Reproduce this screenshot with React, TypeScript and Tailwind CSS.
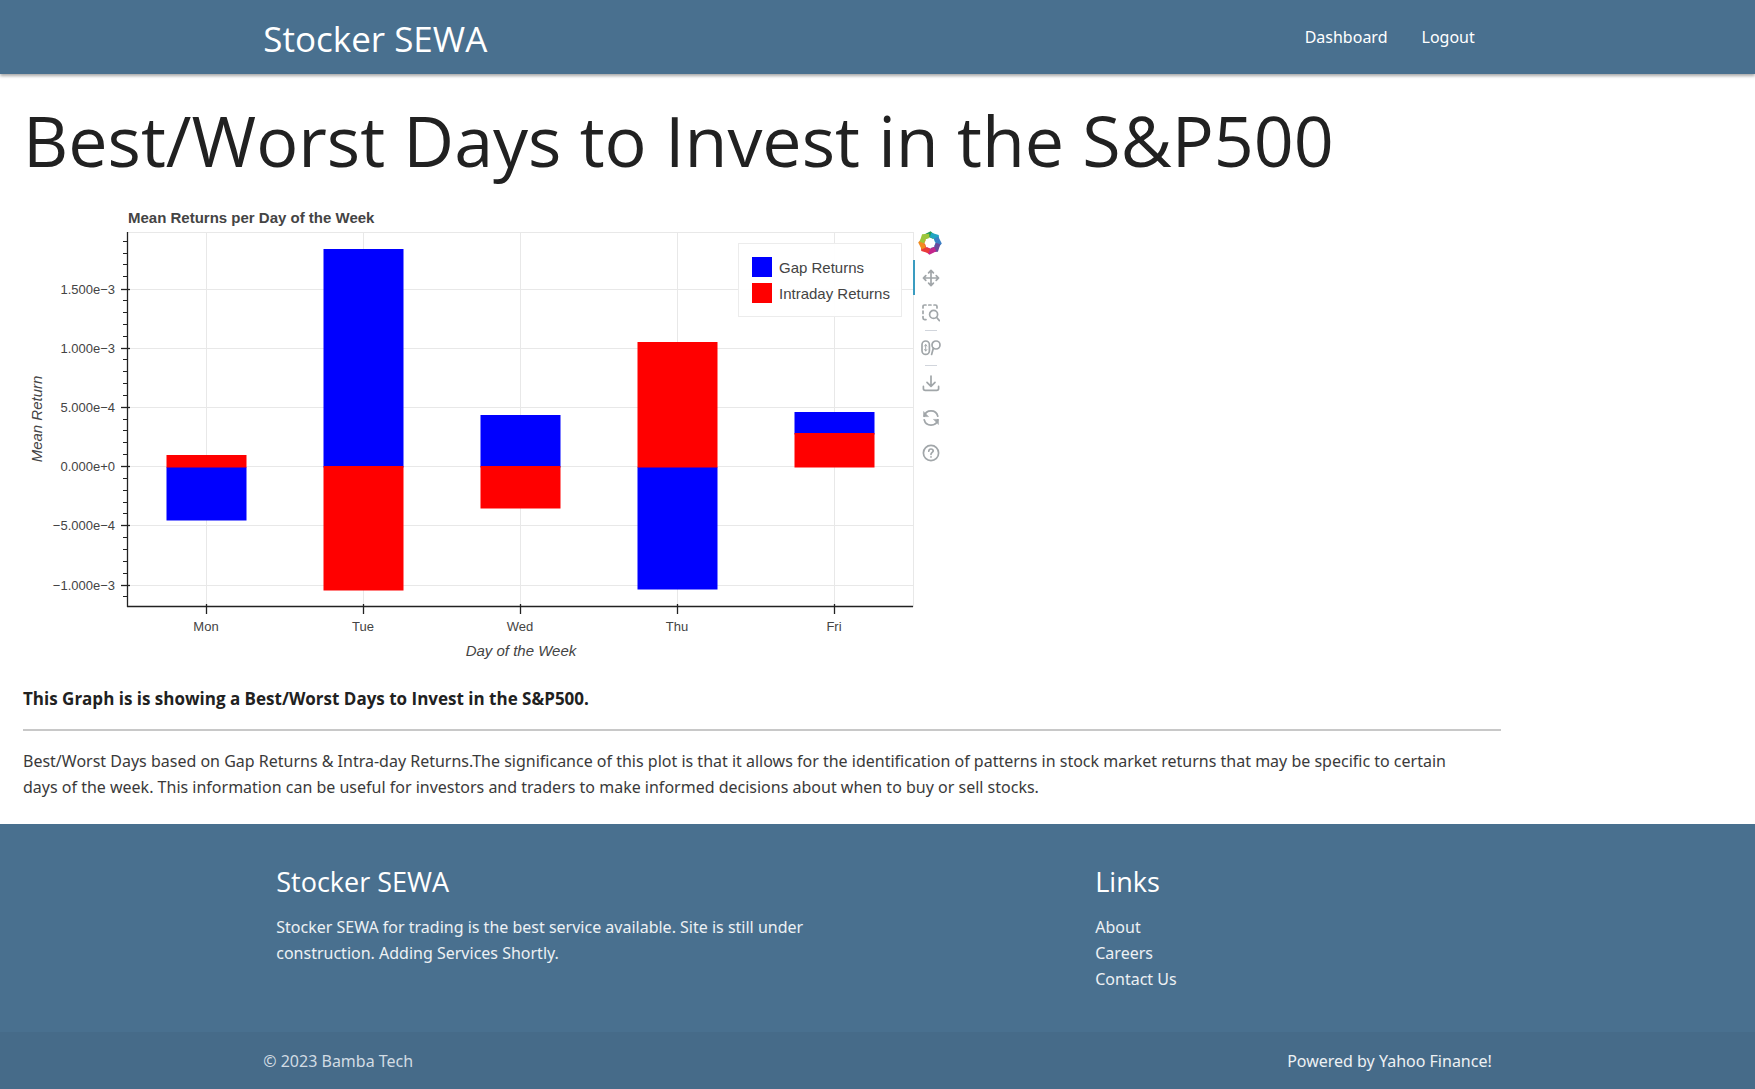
import React from "react";

const days = [
  { name: "Mon", x: 206, bars: [["#0000ff", 467, 520], ["#ff0000", 455, 467]] },
  { name: "Tue", x: 363, bars: [["#0000ff", 249, 467], ["#ff0000", 466, 590]] },
  { name: "Wed", x: 520, bars: [["#0000ff", 415, 467], ["#ff0000", 466, 508]] },
  { name: "Thu", x: 677, bars: [["#0000ff", 467, 589], ["#ff0000", 342, 467]] },
  { name: "Fri", x: 834, bars: [["#0000ff", 412, 434], ["#ff0000", 433, 467]] },
] as { name: string; x: number; bars: [string, number, number][] }[];

const yTicks: [string, number][] = [
  ["1.500e−3", 289],
  ["1.000e−3", 348],
  ["5.000e−4", 407],
  ["0.000e+0", 466],
  ["−5.000e−4", 525],
  ["−1.000e−3", 585],
];

const minorTicks = Array.from({ length: 31 }, (_, i) => i - 11)
  .filter((n) => n % 5 !== 0)
  .map((n) => Math.round(466 - n * 11.86));

function Chart() {
  return (
    <svg
      viewBox="23 205 892 460"
      width="892"
      height="460"
      role="img"
      aria-label="Mean Returns per Day of the Week"
      className="shrink-0 overflow-visible font-['Liberation_Sans',sans-serif]"
    >
      <text x="128" y="223" fontSize="15" fontWeight="700" fill="#444">
        Mean Returns per Day of the Week
      </text>
      <g stroke="#e8e8e8" fill="none">
        <rect x="127.5" y="232.5" width="786" height="374" />
        {yTicks.map(([label, y]) => (
          <path key={label} d={`M128 ${y + 0.5}H913`} />
        ))}
        {days.map((d) => (
          <path key={d.name} d={`M${d.x + 0.5} 232V606`} />
        ))}
      </g>
      {days.map((d) =>
        d.bars.map(([color, top, bottom]) => (
          <rect key={d.name + color} x={d.x - 39.5} y={top} width="80" height={bottom - top + 0.5} fill={color} />
        )),
      )}
      <g stroke="#222" fill="none">
        <path d="M127.5 232V607M127 606.5H913" strokeWidth="1.3" />
        {yTicks.map(([label, y]) => (
          <path key={label} d={`M121 ${y + 0.5}H130`} strokeWidth="1.3" />
        ))}
        {minorTicks.map((y) => (
          <path key={y} d={`M123 ${y + 0.5}H128`} />
        ))}
        {days.map((d) => (
          <path key={d.name} d={`M${d.x + 0.5} 604V614`} strokeWidth="1.3" />
        ))}
      </g>
      <g fontSize="13" fill="#444">
        {yTicks.map(([label, y]) => (
          <text key={label} x="115" y={y + 5} textAnchor="end">
            {label}
          </text>
        ))}
        {days.map((d) => (
          <text key={d.name} x={d.x} y="631" textAnchor="middle">
            {d.name}
          </text>
        ))}
      </g>
      <g fontSize="15" fontStyle="italic" fill="#444" textAnchor="middle">
        <text x="521" y="656">Day of the Week</text>
        <text transform="translate(42 419) rotate(-90)">Mean Return</text>
      </g>
      <rect x="738.5" y="243.5" width="163" height="73" fill="#fff" fillOpacity="0.95" stroke="#ececec" />
      <rect x="752" y="257" width="20" height="20" fill="#0000ff" />
      <rect x="752" y="283" width="20" height="20" fill="#ff0000" />
      <g fontSize="15" fill="#444">
        <text x="779" y="273">Gap Returns</text>
        <text x="779" y="299">Intraday Returns</text>
      </g>
    </svg>
  );
}

const petals = ["#1f9a5a", "#22a6c4", "#3b7fc4", "#6a4a9c", "#c4268c", "#ea3b3b", "#f28a20", "#9cc63c"];

function BokehLogo() {
  return (
    <svg viewBox="-12 -12 24 24" className="size-6" aria-hidden="true">
      {petals.map((color, i) => (
        <path key={color} d="M-6.4 -8.2L0.6 -11.8L6 -7.2L3.2 -4L-0.6 -5.8L-4.2 -4Z" fill={color} transform={`rotate(${i * 45})`} />
      ))}
    </svg>
  );
}

const iconProps = {
  viewBox: "0 0 18 18",
  className: "size-[18px]",
  fill: "none",
  stroke: "#a1a6a9",
  strokeWidth: 1.7,
  strokeLinecap: "round" as const,
  strokeLinejoin: "round" as const,
  "aria-hidden": true,
};

const PanIcon = () => (
  <svg {...iconProps}>
    <path d="M9 1.5v15M1.5 9h15M6.6 3.8L9 1.4l2.4 2.4M6.6 14.2L9 16.6l2.4-2.4M3.8 6.6L1.4 9l2.4 2.4M14.2 6.6L16.6 9l-2.4 2.4" />
  </svg>
);
const BoxZoomIcon = () => (
  <svg {...iconProps}>
    <path d="M1 4V2.6Q1 1 2.6 1H4M6.8 1H9M12 1h1.4Q15 1 15 2.6V4M1 7v2.5M1 12.5V14q0 1.6 1.6 1.6H4" />
    <circle cx="11.6" cy="10.4" r="4" />
    <path d="M14.5 13.3L17.4 16.6" />
  </svg>
);
const WheelZoomIcon = () => (
  <svg {...iconProps} viewBox="0 0 20 18" className="h-[18px] w-5">
    <rect x="1" y="2" width="7.4" height="13.4" rx="3.7" />
    <path d="M4.7 5.6v6.4M3.6 7l1.1-1.4 1.1 1.4M3.6 10.6l1.1 1.4 1.1-1.4" strokeWidth="1" />
    <circle cx="15" cy="6" r="4" />
    <path d="M12.4 9L10.6 15.4" />
  </svg>
);
const SaveIcon = () => (
  <svg {...iconProps}>
    <path d="M9 2v10M5 8.4L9 12.4l4-4M1.4 12.4v2.2Q1.4 16.4 3.2 16.4h11.6Q16.6 16.4 16.6 14.6v-2.2" />
  </svg>
);
const ResetIcon = () => (
  <svg {...iconProps}>
    <path d="M2.2 7.2A7 7 0 0 1 15.8 7.2M15.8 10.8A7 7 0 0 1 2.2 10.8" />
    <path d="M1.6 2.8V7.6H6.2ZM16.4 15.2V10.4H11.8Z" fill="#a1a6a9" strokeWidth="0.6" />
  </svg>
);
const HelpIcon = () => (
  <svg {...iconProps}>
    <circle cx="9" cy="9" r="7.6" />
    <path d="M6.8 7.2Q6.9 5 9 5t2.2 1.9C11.2 8.4 9 8.5 9 10.3M9 12.9v.1" />
  </svg>
);

function Tool({ label, active, children }: { label: string; active?: boolean; children: React.ReactNode }) {
  return (
    <button
      type="button"
      aria-label={label}
      className={
        active
          ? "flex h-[35px] w-[34px] items-center justify-center border-l-2 border-[#3a9cc0]"
          : "flex h-[35px] w-[34px] items-center justify-center border-l-2 border-transparent"
      }
    >
      {children}
    </button>
  );
}

const Divider = () => <span className="-mb-px ml-3 h-px w-3 bg-gray-300" />;

export default function App() {
  return (
    <div className="flex min-h-screen flex-col bg-white font-['Noto_Sans','Open_Sans',sans-serif] text-base text-[#212121]">
      <header className="z-10 bg-[#49708f] text-white shadow-[0_2px_3px_rgba(0,0,0,0.35)]">
        <nav className="mx-auto flex h-[74px] w-[70%] items-center justify-between">
          <a href="#" className="pt-[3px] font-['Open_Sans',sans-serif] text-[35px] leading-none">
            Stocker SEWA
          </a>
          <div className="flex">
            <a href="#dashboard" className="px-[17px]">Dashboard</a>
            <a href="#logout" className="px-[17px]">Logout</a>
          </div>
        </nav>
      </header>

      <main className="px-[23px]">
        <h1 className="pt-[26px] font-['Open_Sans',sans-serif] text-[70px] leading-[80px]">Best/Worst Days to Invest in the S&amp;P500</h1>
        <section className="flex pt-[25px]">
          <Chart />
          <div className="-ml-[2px] flex flex-col pt-5">
            <a href="https://bokeh.org/" aria-label="Bokeh" className="flex h-[35px] w-[34px] items-center justify-center">
              <BokehLogo />
            </a>
            <Tool label="Pan" active>
              <PanIcon />
            </Tool>
            <Tool label="Box Zoom">
              <BoxZoomIcon />
            </Tool>
            <Divider />
            <Tool label="Wheel Zoom">
              <WheelZoomIcon />
            </Tool>
            <Divider />
            <Tool label="Save">
              <SaveIcon />
            </Tool>
            <Tool label="Reset">
              <ResetIcon />
            </Tool>
            <Tool label="Help">
              <HelpIcon />
            </Tool>
          </div>
        </section>
        <div className="max-w-[1478px] pb-6 leading-[26px]">
          <p className="pt-[21px] font-['Open_Sans',sans-serif] text-[17px] font-bold">
            This Graph is is showing a Best/Worst Days to Invest in the S&amp;P500.
          </p>
          <hr className="my-[17px] border-t-2 border-[#c8c8c8]" />
          <p className="pr-5 text-[#3a3a3a]">
            Best/Worst Days based on Gap Returns &amp; Intra-day Returns.The significance of this plot is that it allows
            for the identification of patterns in stock market returns that may be specific to certain days of the week.
            This information can be useful for investors and traders to make informed decisions about when to buy or sell
            stocks.
          </p>
        </div>
      </main>

      <footer className="flex grow flex-col bg-[#49708f] leading-[26px] text-[#edf1f4]">
        <div className="mx-auto grid w-[70%] grow grid-cols-12 pt-[42px]">
          <div className="col-span-6 px-[13px]">
            <h2 className="font-['Open_Sans',sans-serif] text-[27px] leading-8 text-white">Stocker SEWA</h2>
            <p className="pt-4">
              Stocker SEWA for trading is the best service available. Site is still under construction. Adding Services
              Shortly.
            </p>
          </div>
          <div className="col-span-4 col-start-9 px-[13px]">
            <h2 className="font-['Open_Sans',sans-serif] text-[27px] leading-8 text-white">Links</h2>
            <ul className="pt-4">
              <li><a href="#about">About</a></li>
              <li><a href="#careers">Careers</a></li>
              <li><a href="#contact">Contact Us</a></li>
            </ul>
          </div>
        </div>
        <div className="bg-[#466b89]">
          <div className="mx-auto flex h-[57px] w-[70%] items-center justify-between">
            <span className="text-[#d2dce4]">© 2023 Bamba Tech</span>
            <a href="https://finance.yahoo.com">Powered by Yahoo Finance!</a>
          </div>
        </div>
      </footer>
    </div>
  );
}
